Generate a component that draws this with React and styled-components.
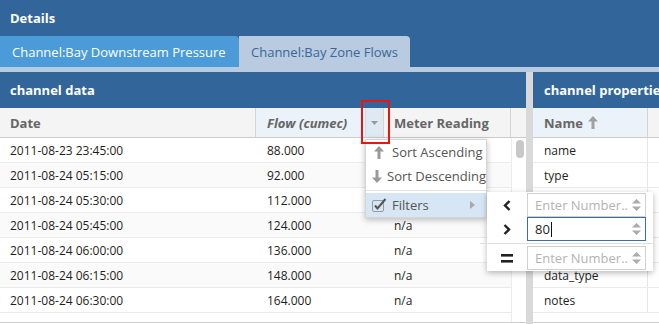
import React from "react";
import styled, { createGlobalStyle } from "styled-components";

const Global = createGlobalStyle`
  html, body { margin: 0; padding: 0; background: #32669a; }
  * { box-sizing: border-box; }
`;

const BLUE = "#32669a";

const Root = styled.div`
  width: 659px;
  height: 324px;
  overflow: hidden;
  position: relative;
  background: ${BLUE};
  font-family: "Open Sans", "DejaVu Sans", sans-serif;
  display: flex;
  flex-direction: column;
`;

const TitleBar = styled.div`
  height: 36px;
  flex: none;
  display: flex;
  align-items: center;
  padding-left: 10px;
  color: #fff;
  font-weight: 700;
  font-size: 13px;
`;

const TabBar = styled.div`
  height: 31px;
  flex: none;
  display: flex;
  align-items: stretch;
`;

const Tab = styled.div`
  width: ${(p) => p.$w}px;
  background: ${(p) => (p.$active ? "#b9cbe0" : "#4a9bd7")};
  color: ${(p) => (p.$active ? "#3a6898" : "#fff")};
  font-size: 13px;
  padding-left: 12px;
  display: flex;
  align-items: center;
  border-radius: 0 4px 0 0;
  white-space: nowrap;
  overflow: hidden;
`;

const TabStrip = styled.div`
  height: 5px;
  flex: none;
  background: #b9cbe0;
`;

const Panels = styled.div`
  flex: 1;
  min-height: 0;
  display: flex;
  gap: 7px;
  background: #d9d9d9;
`;

const Panel = styled.div`
  width: ${(p) => (p.$w ? `${p.$w}px` : "auto")};
  flex: ${(p) => (p.$w ? "none" : "1")};
  min-width: 0;
  background: #fff;
  display: flex;
  flex-direction: column;
  overflow: hidden;
`;

const PanelHeader = styled.div`
  height: 36px;
  flex: none;
  background: ${BLUE};
  color: #fff;
  font-weight: 700;
  font-size: 13px;
  display: flex;
  align-items: center;
  padding-left: ${(p) => p.$pad || 10}px;
  white-space: nowrap;
  overflow: hidden;
`;

const HeaderRow = styled.div`
  height: 30px;
  flex: none;
  display: grid;
  grid-template-columns: ${(p) => p.$cols};
  background: #f4f4f4;
  border-bottom: 1px solid #cbcbcb;
`;

const HeadCell = styled.div`
  display: flex;
  align-items: center;
  padding-left: ${(p) => p.$pad ?? 10}px;
  font-size: 13px;
  font-weight: 700;
  font-style: ${(p) => (p.$italic ? "italic" : "normal")};
  color: #666;
  background: ${(p) => (p.$hot ? "#ebf2fa" : "transparent")};
  border-right: ${(p) => (p.$noBorder ? "none" : "1px solid #d4d4d4")};
  white-space: nowrap;
  gap: 5px;
`;

const HeadLabel = styled.div`
  flex: 1;
`;

const Trigger = styled.div`
  width: 18px;
  align-self: stretch;
  background: #dfe9f4;
  border-left: 1px solid #cfdbe8;
  display: flex;
  align-items: center;
  justify-content: center;
`;

const Body = styled.div`
  height: 185px;
  flex: none;
  display: flex;
  overflow: hidden;
  border-bottom: 1px solid #cfcfcf;
`;

const RowsCol = styled.div`
  width: ${(p) => (p.$w ? `${p.$w}px` : "auto")};
  flex: ${(p) => (p.$w ? "none" : "1")};
`;

const ScrollTrack = styled.div`
  flex: 1;
  border-left: 1px solid #ececec;
  padding: 2px 0 0 4px;
`;

const Thumb = styled.div`
  width: 8px;
  height: 18px;
  border-radius: 4px;
  background: #c8c8c8;
`;

const Row = styled.div`
  height: 25px;
  display: grid;
  grid-template-columns: ${(p) => p.$cols};
  border-bottom: 1px solid #ebebeb;
  background: ${(p) => (p.$alt ? "#fafafa" : "#fff")};
`;

const Cell = styled.div`
  display: flex;
  align-items: center;
  padding-left: ${(p) => p.$pad ?? 10}px;
  font-size: 12px;
  color: #1e1e1e;
  white-space: nowrap;
  border-right: ${(p) => (p.$border ? "1px solid #e6e6e6" : "none")};
`;

/* Menu */
const Menu = styled.div`
  position: absolute;
  z-index: 3;
  left: 365px;
  top: 139px;
  width: 122px;
  background: #fff;
  border: 1px solid #d6d6d6;
  box-shadow: 0 2px 6px rgba(0, 0, 0, 0.25);
  display: flex;
  flex-direction: column;
`;

const MenuItem = styled.div`
  height: 24px;
  display: flex;
  align-items: center;
  font-size: 13px;
  color: #555;
  background: ${(p) => (p.$active ? "#d7e6f5" : "transparent")};
  white-space: nowrap;
`;

const MenuIcon = styled.div`
  width: 26px;
  display: flex;
  justify-content: center;
  align-items: center;
`;

const MenuText = styled.div`
  flex: 1;
`;

const MenuArrow = styled.div`
  width: 16px;
  display: flex;
  align-items: center;
`;

const MenuSep = styled.div`
  height: 1px;
  background: #e2e2e2;
  margin: 2px 0;
`;

const SubMenu = styled.div`
  position: absolute;
  z-index: 3;
  left: 487px;
  top: 192px;
  width: 166px;
  height: 79px;
  background: #fff;
  box-shadow: 0 2px 6px rgba(0, 0, 0, 0.28);
  padding: 1px 7px 0 0;
  display: flex;
  flex-direction: column;
`;

const SubRow = styled.div`
  height: 24px;
  flex: none;
  display: flex;
  align-items: center;
`;

const SubIcon = styled.div`
  width: 40px;
  display: flex;
  justify-content: center;
  align-items: center;
`;

const SubSep = styled.div`
  height: 1px;
  flex: none;
  background: #e0e0e0;
  margin: 2px 0 2px -7px;
  width: 173px;
`;

const NumInput = styled.div`
  width: 119px;
  height: 24px;
  border: 1px solid ${(p) => (p.$focus ? "#3b6ea6" : "#d0d0d0")};
  display: flex;
  align-items: center;
  padding-left: 7px;
  font-size: 13px;
  color: ${(p) => (p.$placeholder ? "#b3b3b3" : "#1e1e1e")};
  white-space: nowrap;
`;

const InputText = styled.div`
  flex: 1;
  display: flex;
  align-items: center;
`;

const Caret = styled.span`
  display: inline-block;
  width: 1px;
  height: 15px;
  background: #111;
  margin-left: 1px;
`;

const Spinner = styled.div`
  width: 18px;
  display: flex;
  justify-content: center;
`;

const Highlight = styled.div`
  position: absolute;
  z-index: 5;
  left: 361px;
  top: 100px;
  width: 29px;
  height: 44px;
  border: 2px solid #e81515;
`;

const DownTri = () => (
  <svg width="7" height="4" viewBox="0 0 7 4">
    <path d="M0 0H7L3.5 4Z" fill="#9a9a9a" />
  </svg>
);

const RightTri = () => (
  <svg width="5" height="8" viewBox="0 0 5 8">
    <path d="M0 0L5 4L0 8Z" fill="#a8a8a8" />
  </svg>
);

const UpArrow = ({ color = "#999", flip }) => (
  <svg
    width="10"
    height="13"
    viewBox="0 0 10 13"
    style={flip ? { transform: "scaleY(-1)" } : undefined}
  >
    <path d="M5 0L10 5.5H6.5V13H3.5V5.5H0Z" fill={color} />
  </svg>
);

const CheckIcon = () => (
  <svg width="15" height="14" viewBox="0 0 15 14">
    <rect x="0.5" y="2.5" width="11" height="11" rx="1.5" fill="none" stroke="#9a9a9a" />
    <path d="M3 7.5L5.5 10.5L13.5 1" fill="none" stroke="#555" strokeWidth="2" />
  </svg>
);

const Chevron = ({ dir }) => (
  <svg width="8" height="11" viewBox="0 0 8 11">
    <path
      d={dir === "left" ? "M6.5 1L2 5.5L6.5 10" : "M1.5 1L6 5.5L1.5 10"}
      fill="none"
      stroke="#222"
      strokeWidth="2.4"
    />
  </svg>
);

const Equals = () => (
  <svg width="12" height="9" viewBox="0 0 12 9">
    <rect x="0" y="0" width="12" height="2.6" fill="#222" />
    <rect x="0" y="6" width="12" height="2.6" fill="#222" />
  </svg>
);

const SpinIcon = () => (
  <svg width="9" height="12" viewBox="0 0 9 12">
    <path d="M4.5 0L9 4.5H0Z" fill="#ababab" />
    <path d="M0 7.5H9L4.5 12Z" fill="#ababab" />
  </svg>
);

const LEFT_COLS = "256px 128px 127px";
const RIGHT_COLS = "115px 1fr";

const dataRows = [
  ["2011-08-23 23:45:00", "88.000", ""],
  ["2011-08-24 05:15:00", "92.000", ""],
  ["2011-08-24 05:30:00", "112.000", ""],
  ["2011-08-24 05:45:00", "124.000", "n/a"],
  ["2011-08-24 06:00:00", "136.000", "n/a"],
  ["2011-08-24 06:15:00", "148.000", "n/a"],
  ["2011-08-24 06:30:00", "164.000", "n/a"],
];

const propRows = ["name", "type", "", "", "", "data_type", "notes"];

const Input = ({ value, focus }) => (
  <NumInput $focus={focus} $placeholder={!value}>
    <InputText>
      {value || "Enter Number.."}
      {focus && <Caret />}
    </InputText>
    <Spinner>
      <SpinIcon />
    </Spinner>
  </NumInput>
);

export default function App() {
  return (
    <Root>
      <Global />
      <TitleBar>Details</TitleBar>
      <TabBar>
        <Tab $w={239}>Channel:Bay Downstream Pressure</Tab>
        <Tab $w={171} $active>
          Channel:Bay Zone Flows
        </Tab>
      </TabBar>
      <TabStrip />
      <Panels>
        <Panel $w={526}>
          <PanelHeader>channel data</PanelHeader>
          <HeaderRow $cols={`${LEFT_COLS} 1fr`}>
            <HeadCell>Date</HeadCell>
            <HeadCell $italic $hot $pad={11}>
              <HeadLabel>Flow (cumec)</HeadLabel>
              <Trigger>
                <DownTri />
              </Trigger>
            </HeadCell>
            <HeadCell>Meter Reading</HeadCell>
            <HeadCell $noBorder />
          </HeaderRow>
          <Body>
            <RowsCol $w={511}>
              {dataRows.map((r, i) => (
                <Row key={i} $cols={LEFT_COLS} $alt={i % 2 === 1}>
                  <Cell>{r[0]}</Cell>
                  <Cell $pad={11}>{r[1]}</Cell>
                  <Cell>{r[2]}</Cell>
                </Row>
              ))}
            </RowsCol>
            <ScrollTrack>
              <Thumb />
            </ScrollTrack>
          </Body>
        </Panel>
        <Panel>
          <PanelHeader $pad={11}>channel properties</PanelHeader>
          <HeaderRow $cols={RIGHT_COLS}>
            <HeadCell $hot $pad={11}>
              Name <UpArrow color="#a0a0a0" />
            </HeadCell>
            <HeadCell $noBorder />
          </HeaderRow>
          <Body>
            <RowsCol>
              {propRows.map((p, i) => (
                <Row key={i} $cols={RIGHT_COLS}>
                  <Cell $pad={11} $border>
                    {p}
                  </Cell>
                  <Cell />
                </Row>
              ))}
            </RowsCol>
          </Body>
        </Panel>
      </Panels>

      <Highlight />

      <Menu>
        <MenuItem>
          <MenuIcon>
            <UpArrow />
          </MenuIcon>
          <MenuText>Sort Ascending</MenuText>
        </MenuItem>
        <MenuItem>
          <MenuIcon>
            <UpArrow flip />
          </MenuIcon>
          <MenuText>Sort Descending</MenuText>
        </MenuItem>
        <MenuSep />
        <MenuItem $active>
          <MenuIcon>
            <CheckIcon />
          </MenuIcon>
          <MenuText>Filters</MenuText>
          <MenuArrow>
            <RightTri />
          </MenuArrow>
        </MenuItem>
      </Menu>

      <SubMenu>
        <SubRow>
          <SubIcon>
            <Chevron dir="left" />
          </SubIcon>
          <Input />
        </SubRow>
        <SubRow>
          <SubIcon>
            <Chevron dir="right" />
          </SubIcon>
          <Input value="80" focus />
        </SubRow>
        <SubSep />
        <SubRow>
          <SubIcon>
            <Equals />
          </SubIcon>
          <Input />
        </SubRow>
      </SubMenu>
    </Root>
  );
}
